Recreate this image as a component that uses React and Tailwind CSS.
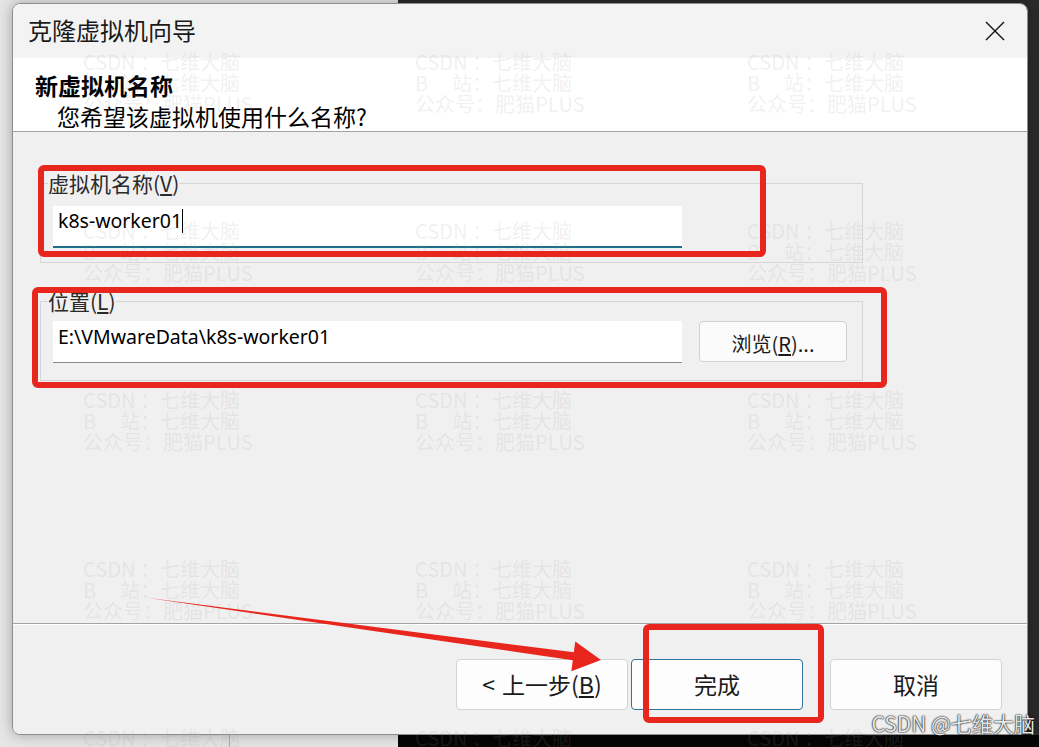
import React from 'react';

const UI = "font-['Noto_Sans','Noto_Sans_CJK_SC',sans-serif]";
const CJK = "font-['Noto_Sans_CJK_SC','Noto_Sans',sans-serif]";

// faint site watermark, repeated over the whole shot
const Watermark = () => (
  <div className={`${CJK} text-[20px] leading-[21px] text-[rgba(150,150,150,0.15)] whitespace-nowrap`}>
    <div className="flex">
      <span className="w-[57px]">CSDN</span>
      <span>：七维大脑</span>
    </div>
    <div className="flex">
      <span className="w-[57px] flex justify-between">
        <span>B</span>
        <span>站</span>
      </span>
      <span>：七维大脑</span>
    </div>
    <div>公众号：肥猫PLUS</div>
  </div>
);

const Button = ({ children, primary }) => (
  <button
    className={`w-[172px] h-[51px] rounded-[4px] bg-[#fdfdfd] text-[23px] leading-none text-[#1a1a1a] flex items-center justify-center border ${
      primary ? 'border-[#2f7399]' : 'border-[#d3d3d3]'
    }`}
  >
    {children}
  </button>
);

export default function App() {
  const marks = Array.from({ length: 15 });

  return (
    <div className={`relative w-[1039px] h-[747px] overflow-hidden bg-[#2b2b2b] ${UI}`}>
      {/* windows behind the dialog */}
      <div className="absolute left-0 top-0 w-[398px] h-[747px] bg-[#e6e6e6]" />
      <div className="absolute left-[229px] top-[735px] w-px h-[12px] bg-[#b5b5b5]" />
      <div className="absolute left-[398px] top-[735px] right-0 bottom-0 bg-[#050505]" />

      {/* wizard dialog */}
      <div className="relative ml-[12px] mt-[3px] w-[1016px] h-[732px] flex flex-col rounded-[8px] overflow-hidden border border-[#8e8e8e] shadow-[0_0_14px_rgba(0,0,0,0.3)]">
        {/* title bar */}
        <div className="h-[54px] shrink-0 bg-[#f3f3f3] flex items-center justify-between pl-[15px] pr-[22px] pb-[2px]">
          <span className={`${CJK} text-[24px] leading-none text-[#1a1a1a]`}>克隆虚拟机向导</span>
          <svg width="20" height="20" viewBox="0 0 20 20" className="mt-[1px]">
            <path d="M1 1 L19 19 M19 1 L1 19" stroke="#111" strokeWidth="1.4" fill="none" />
          </svg>
        </div>

        {/* header */}
        <div className={`h-[74px] shrink-0 bg-white border-b border-[#a3a3a3] pt-[12px] ${CJK} text-[23px] text-black`}>
          <div className="pl-[22px] leading-[30px] font-bold">新虚拟机名称</div>
          <div className="pl-[44px] leading-[30px] mt-px">您希望该虚拟机使用什么名称?</div>
        </div>

        {/* body */}
        <div className="h-[491px] shrink-0 bg-[#f0f0f0] pl-[27px] pt-[39px]">
          <fieldset className="w-[823px] border border-[#d6d6d6] px-[12px] pb-[14px]">
            <legend className={`-ml-[5px] ${CJK} text-[21px] leading-[24px] text-[#2a2a2a]`}>
              虚拟机名称(<span className="underline underline-offset-2">V</span>)
            </legend>
            <div className="mt-[11px] w-[629px] h-[42px] bg-white border-b-2 border-[#1f6e8c] pl-[5px] pt-[2px] flex items-start">
              <span className="text-[19.5px] leading-[26px] text-black">k8s-worker01</span>
              <span className="inline-block w-px h-[24px] bg-black mt-[1px]" />
            </div>
          </fieldset>

          <fieldset className="mt-[26px] w-[823px] border border-[#d6d6d6] px-[12px] pb-[17px]">
            <legend className={`-ml-[5px] ${CJK} text-[21px] leading-[24px] text-[#2a2a2a]`}>
              位置(<span className="underline underline-offset-2">L</span>)
            </legend>
            <div className="mt-[8px] flex items-start gap-[17px]">
              <div className="w-[629px] h-[42px] bg-white border-b border-[#8a8a8a] pl-[5px] pt-[3px]">
                <span className="text-[19.5px] leading-[26px] text-black">E:\VMwareData\k8s-worker01</span>
              </div>
              <button className={`w-[148px] h-[41px] rounded-[4px] bg-[#fbfbfb] border border-[#d0d0d0] ${CJK} text-[20px] leading-none text-[#1a1a1a] flex items-center justify-center pt-[4px]`}>
                浏览(<span className="underline underline-offset-2">R</span>)...
              </button>
            </div>
          </fieldset>
        </div>

        {/* footer */}
        <div className="flex-1 bg-[#f0f0f0] border-t border-[#a3a3a3]">
          <div className="h-px bg-white" />
          <div className={`flex justify-end pr-[25px] pt-[34px] ${CJK}`}>
            <Button>
              <span>&lt;</span>
              <span className="ml-[7px]">上一步(<span className="underline underline-offset-2">B</span>)</span>
            </Button>
            <div className="ml-[3px]">
              <Button primary>完成</Button>
            </div>
            <div className="ml-[27px]">
              <Button>取消</Button>
            </div>
          </div>
        </div>
      </div>

      {/* watermark layer */}
      <div className="absolute inset-0 pointer-events-none grid grid-cols-[repeat(3,332px)] auto-rows-[169px] pl-[83px] pt-[51px]">
        {marks.map((_, i) => (
          <Watermark key={i} />
        ))}
      </div>

      {/* red annotations */}
      <svg className="absolute left-0 top-0 pointer-events-none" width="1039" height="747" viewBox="0 0 1039 747">
        <g fill="none" stroke="#e8261e" strokeWidth="6" strokeLinejoin="round">
          <rect x="41" y="168" width="722" height="86" rx="3" />
          <rect x="35" y="290" width="849" height="95" rx="3" />
          <rect x="646" y="627" width="175" height="93" rx="3" />
        </g>
        <polygon
          fill="#e8261e"
          points="145,597.5 573.8,652.3 575.3,641.4 601,660 571.3,671.2 572.8,660.3"
        />
      </svg>

      {/* site stamp */}
      <div className={`absolute right-[4px] top-[710px] ${CJK} text-[21px] leading-[26px] text-[#e8e8e8] [text-shadow:0_0_2px_#000,0_0_1px_#000]`}>
        CSDN @七维大脑
      </div>
    </div>
  );
}
